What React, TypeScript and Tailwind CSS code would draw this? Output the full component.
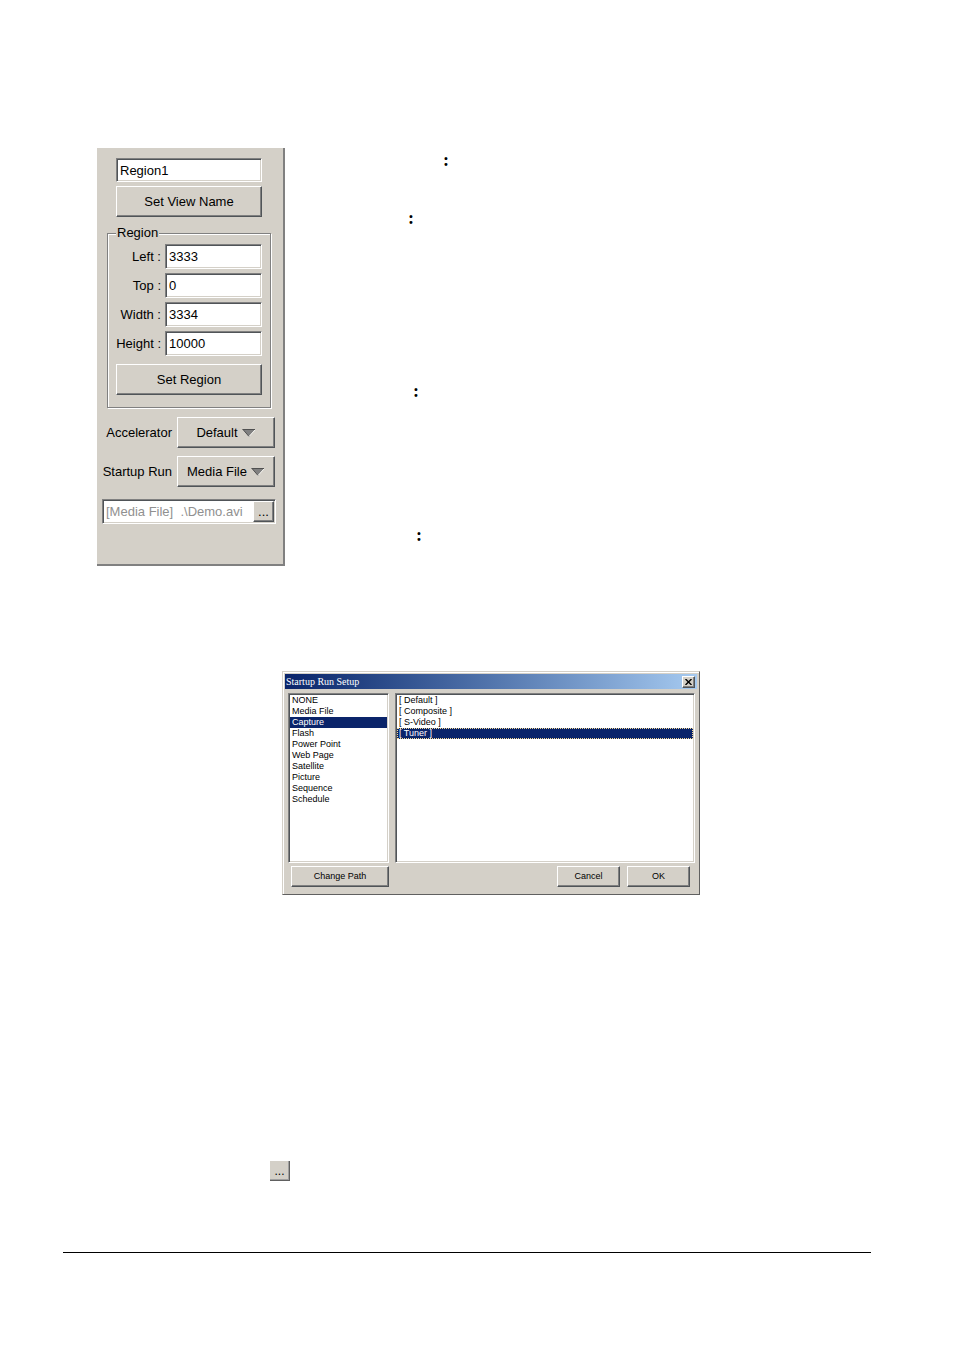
import { useState } from 'react'
import type { ReactNode } from 'react'

const REGION_FIELDS = [
  { id: 'left',   label: 'Left :',   value: '3333' },
  { id: 'top',    label: 'Top :',    value: '0' },
  { id: 'width',  label: 'Width :',  value: '3334' },
  { id: 'height', label: 'Height :', value: '10000' },
]

const SOURCES = [
  'NONE',
  'Media File',
  'Capture',
  'Flash',
  'Power Point',
  'Web Page',
  'Satellite',
  'Picture',
  'Sequence',
  'Schedule',
]

const INPUTS = ['[ Default ]', '[ Composite ]', '[ S-Video ]', '[ Tuner ]']

// Classic raised and sunken 3D edges
const RAISED =
  'bg-[#d4d0c8] border border-t-white border-l-white border-r-[#505458] border-b-[#505458] shadow-[inset_-1px_-1px_0_#808080]'
const SUNKEN =
  'bg-white border border-t-[#808080] border-l-[#808080] border-r-white border-b-white shadow-[inset_1px_1px_0_#505458,inset_-1px_-1px_0_#d4d0c8]'

function PanelButton({ children }: { children: ReactNode }) {
  return (
    <button type="button" className={`h-[31px] w-full ${RAISED}`}>
      {children}
    </button>
  )
}

interface DropdownProps {
  id:      string
  label:   string
  options: string[]
}

function Dropdown({ id, label, options }: DropdownProps) {
  return (
    <div className="flex items-center justify-end gap-[5px]">
      <label htmlFor={id} className="whitespace-nowrap">{label}</label>
      <div className={`flex h-[31px] w-[98px] shrink-0 items-center justify-center gap-1 ${RAISED}`}>
        <select id={id} className="field-sizing-content appearance-none bg-transparent outline-none">
          {options.map((option) => (
            <option key={option}>{option}</option>
          ))}
        </select>
        <svg width="14" height="8" viewBox="0 0 14 8" aria-hidden="true">
          <path d="M1 0.5H13L7 7.5Z" fill="#808080" />
          <path d="M0.5 0.5H13M1 0.5L7 7.5" stroke="#505050" fill="none" />
          <path d="M13 1L7 7.5" stroke="#f4f4f0" fill="none" />
        </svg>
      </div>
    </div>
  )
}

/** Side panel with the view name, its region and what runs at startup. */
function RegionPanel() {
  return (
    <section className="flex w-[188px] shrink-0 flex-col border-r-2 border-b-2 border-[#808080] bg-[#d4d0c8] pt-[10px] pr-[7px] pb-10 pl-[5px] text-[13px] leading-4">
      <div className="flex flex-col gap-1 px-[14px]">
        <input
          aria-label="View name"
          defaultValue="Region1"
          className={`h-6 w-full px-[3px] ${SUNKEN}`}
        />
        <PanelButton>Set View Name</PanelButton>
      </div>

      <fieldset className="mx-[5px] mt-2 min-w-0 border border-[#808080] px-2 pb-3 shadow-[1px_1px_0_#fff,inset_1px_1px_0_#fff]">
        <legend className="bg-[#d4d0c8] px-px">Region</legend>
        <div className="mt-[3px] mb-2 flex flex-col gap-1">
          {REGION_FIELDS.map((field) => (
            <div key={field.id} className="flex items-center justify-end gap-1">
              <label htmlFor={field.id} className="whitespace-nowrap">{field.label}</label>
              <input
                id={field.id}
                defaultValue={field.value}
                className={`h-[25px] w-[97px] shrink-0 px-[3px] ${SUNKEN}`}
              />
            </div>
          ))}
        </div>
        <PanelButton>Set Region</PanelButton>
      </fieldset>

      <div className="mt-[9px] flex flex-col gap-2 pr-px">
        <Dropdown id="accelerator" label="Accelerator" options={['Default']} />
        <Dropdown id="startup" label="Startup Run" options={['Media File']} />
      </div>

      <div className={`mt-3 flex h-[25px] p-px ${SUNKEN}`}>
        <input
          aria-label="Startup file"
          readOnly
          defaultValue={'[Media File]  .\\Demo.avi'}
          className="min-w-0 flex-1 bg-transparent pl-0.5 text-[#909090] outline-none"
        />
        <button type="button" aria-label="Browse" className={`w-[21px] leading-3 ${RAISED}`}>
          ...
        </button>
      </div>
    </section>
  )
}

interface ListBoxProps {
  items:     string[]
  selected:  string
  focused?:  boolean
  onSelect:  (item: string) => void
  className: string
}

function ListBox({ items, selected, focused, onSelect, className }: ListBoxProps) {
  return (
    <ul className={`h-[170px] p-px ${SUNKEN} ${className}`}>
      {items.map((item) => (
        <li key={item}>
          <button
            type="button"
            onClick={() => onSelect(item)}
            className={`block h-[11px] w-full px-0.5 text-left ${
              item === selected ? 'bg-[#0a246a] text-white' : ''
            } ${item === selected && focused ? 'outline-1 -outline-offset-1 outline-dotted outline-[#f5db95]' : ''}`}
          >
            {item}
          </button>
        </li>
      ))}
    </ul>
  )
}

function StartupDialog() {
  const [source, setSource] = useState('Capture')
  const [input, setInput]   = useState('[ Tuner ]')

  return (
    <section className="w-full max-w-[418px] border border-t-[#d4d0c8] border-r-[#606060] border-b-[#606060] border-l-[#d4d0c8] bg-[#d4d0c8] p-0.5 pb-[7px] text-[9px] leading-[11px] shadow-[inset_1px_1px_0_#fff]">
      <header className="flex h-[15px] items-center justify-between bg-linear-to-r from-[#0a246a] to-[#a6caf0] pr-0.5 pl-px">
        <h2 className="font-['Liberation_Serif',serif] text-[10px] text-white">Startup Run Setup</h2>
        <button
          type="button"
          aria-label="Close"
          className={`flex h-3 w-[13px] items-center justify-center ${RAISED}`}
        >
          <svg width="7" height="6" viewBox="0 0 7 6" aria-hidden="true">
            <path d="M0.5 0L6.5 6M6.5 0L0.5 6" stroke="#000" strokeWidth="1.4" />
          </svg>
        </button>
      </header>

      <div className="mt-1 flex gap-1.5 pr-0.5 pl-[3px]">
        <ListBox items={SOURCES} selected={source} onSelect={setSource} className="w-[101px] shrink-0" />
        <ListBox items={INPUTS} selected={input} focused onSelect={setInput} className="min-w-0 flex-1" />
      </div>

      <footer className="mt-[3px] flex gap-[7px] pr-[7px] pl-1.5">
        <button type="button" className={`mr-auto h-[21px] w-[98px] ${RAISED}`}>Change Path</button>
        <button type="button" className={`h-[21px] w-[63px] ${RAISED}`}>Cancel</button>
        <button type="button" className={`h-[21px] w-[63px] ${RAISED}`}>OK</button>
      </footer>
    </section>
  )
}

export default function App() {
  return (
    <main className="min-h-screen bg-white pt-[148px] pr-[83px] pb-24 pl-[63px] font-['Liberation_Sans',sans-serif] text-black">
      <div className="flex pl-[34px]">
        <RegionPanel />
        <div className="flex flex-col pl-[123px] font-['Liberation_Serif',serif] text-lg leading-6 font-bold">
          <p className="pl-[35px]">:</p>
          <p className="mt-[34px]">:</p>
          <p className="mt-[149px] pl-[5px]">:</p>
          <p className="mt-[120px] pl-2">:</p>
        </div>
      </div>

      <div className="mt-[105px] pl-[219px]">
        <StartupDialog />
      </div>

      <div className="mt-[266px] pl-[207px]">
        <button
          type="button"
          aria-label="Browse"
          className="block size-5 border-r border-b border-[#606060] bg-[#d4d0c8] text-xs leading-3 shadow-[inset_-1px_-1px_0_#a0a0a0]"
        >
          ...
        </button>
      </div>

      <hr className="mt-[71px] border-black" />
    </main>
  )
}
